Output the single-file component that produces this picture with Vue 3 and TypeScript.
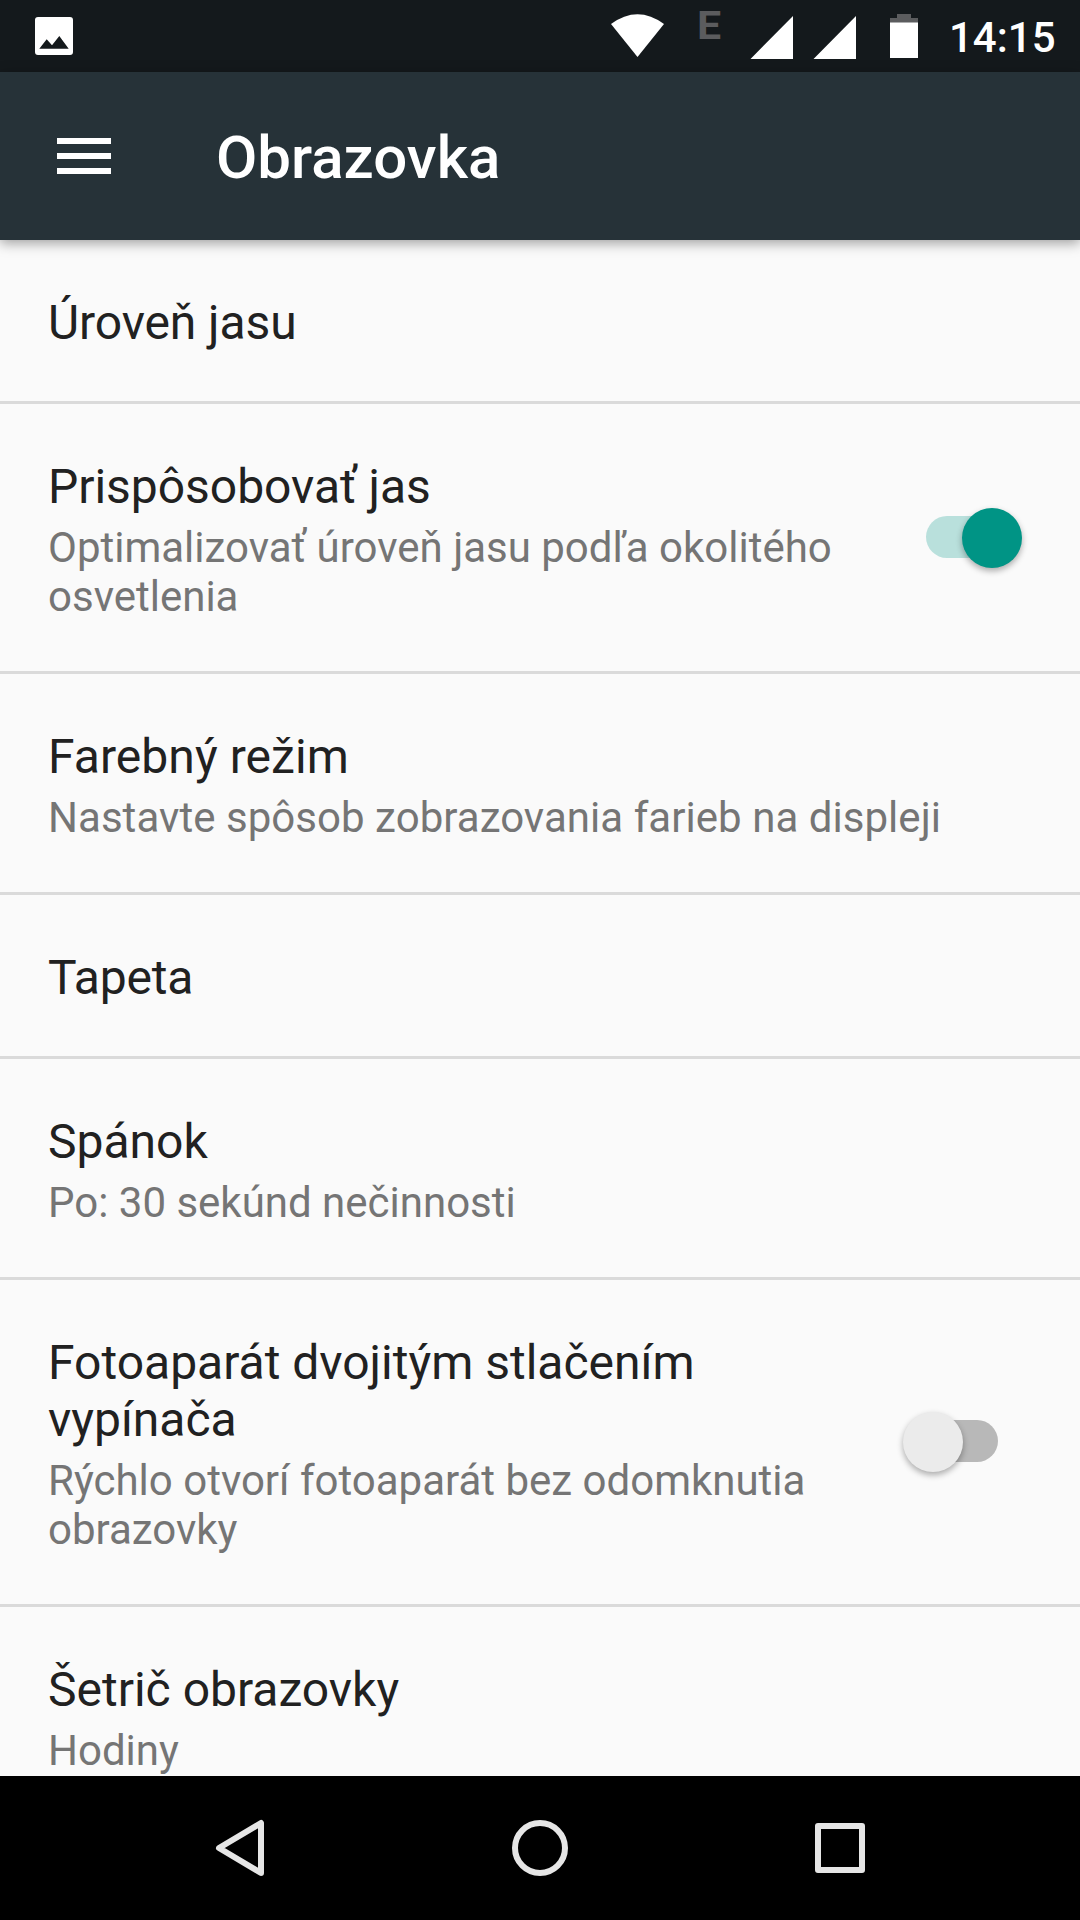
<script setup lang="ts">
interface Item { title: string[]; sub?: string[]; on?: boolean; toggle?: boolean; height: number; titleTracking?: number; subTracking?: number }
const items: Item[] = [
  { title: ['Úroveň jasu'], height: 164, titleTracking: -0.1 },
  { title: ['Prispôsobovať jas'], sub: ['Optimalizovať úroveň jasu podľa okolitého', 'osvetlenia'], toggle: true, on: true, height: 270, titleTracking: -0.04 },
  { title: ['Farebný režim'], sub: ['Nastavte spôsob zobrazovania farieb na displeji'], height: 221, titleTracking: 0.06, subTracking: 0.045 },
  { title: ['Tapeta'], height: 164, titleTracking: -0.2 },
  { title: ['Spánok'], sub: ['Po: 30 sekúnd nečinnosti'], height: 221 },
  { title: ['Fotoaparát dvojitým stlačením', 'vypínača'], sub: ['Rýchlo otvorí fotoaparát bez odomknutia', 'obrazovky'], toggle: true, on: false, height: 327 },
  { title: ['Šetrič obrazovky'], sub: ['Hodiny'], height: 221 },
]
</script>

<template>
  <div class="screen">
    <header class="status">
      <svg width="1080" height="72" viewBox="0 0 1080 72">
        <path fill="#fff" fill-rule="evenodd" d="M38 17H70Q73 17 73 20V52Q73 55 70 55H38Q35 55 35 52V20Q35 17 38 17ZM39.3 48.7H68.7L59.3 36L52 45.3L46.7 39.3Z" />
        <path fill="#fff" d="M611 24Q637.5 4.5 664 24L637.5 57Z" />
        <path fill="#fff" d="M793 16V59H750.5ZM856 16V59H813.5Z" />
        <path fill="#5b5c5e" d="M897 14H911V18H918V23H890V18H897Z" />
        <path fill="#fff" d="M890 22.5H918V58H890Z" />
      </svg>
      <span class="edge">E</span>
      <span class="time">14:15</span>
    </header>
    <div class="bar">
      <svg class="menu" width="54" height="36" viewBox="0 0 54 36"><path fill="#fff" d="M0 0H54V6H0ZM0 15H54V21H0ZM0 30H54V36H0Z" /></svg>
      <h1>Obrazovka</h1>
    </div>
    <main>
      <section v-for="item in items" :key="item.title[0]" class="item" :style="{ height: item.height + 'px' }">
        <div class="copy">
          <div v-for="line in item.title" :key="line" class="title" :style="{ letterSpacing: (item.titleTracking ?? 0) + 'px' }">{{ line }}</div>
          <div v-if="item.sub" class="sub" :style="{ letterSpacing: (item.subTracking ?? 0) + 'px' }"><div v-for="line in item.sub" :key="line">{{ line }}</div></div>
        </div>
        <div v-if="item.toggle" class="switch" :class="{ on: item.on }"><i class="track"></i><i class="thumb"></i></div>
      </section>
    </main>
    <nav>
      <svg width="1080" height="144" viewBox="0 0 1080 144" fill="none" stroke="#e6e6e6" stroke-width="6" stroke-linejoin="round">
        <path d="M261 47V97L219 72Z" /><circle cx="540" cy="72" r="25" /><rect x="818" y="50" width="44" height="44" />
      </svg>
    </nav>
  </div>
</template>

<style scoped>
.screen { width: 1080px; height: 1920px; overflow: hidden; display: flex; flex-direction: column; background: #fafafa; font-family: Roboto, sans-serif; }
.status { height: 72px; flex: none; position: relative; background: #14191c; color: #fff; }
svg { display: block; }
.edge { position: absolute; left: 697px; top: 3px; font-size: 39px; line-height: 46px; font-weight: 700; color: #5b5c5e; transform: scaleX(1.1); transform-origin: left; }
.time { position: absolute; left: 949px; top: 13px; font-size: 42px; line-height: 50px; font-weight: 500; }
.bar { height: 168px; flex: none; display: flex; align-items: center; background: #263238; color: #fff; box-shadow: 0 3px 12px rgba(0,0,0,.38); z-index: 1; }
.menu { margin-left: 57px; margin-right: 105px; }
h1 { margin: 0; font-size: 60px; line-height: 70px; font-weight: 500; position: relative; top: 2px; }
main { flex: 1; min-height: 0; overflow: hidden; }
.item { box-sizing: border-box; display: flex; justify-content: space-between; padding: 54px 48px 0; border-bottom: 3px solid #dadada; }
.copy { white-space: nowrap; }
.title { font-size: 48px; line-height: 57px; color: #212121; }
.sub { margin-top: 8px; font-size: 42px; line-height: 49px; color: #757575; }
.switch { position: relative; width: 120px; height: 60px; align-self: center; top: -28px; margin-right: 9px; }
.switch.on { top: -27.5px; }
.track { position: absolute; left: 23px; top: 9px; width: 72px; height: 42px; border-radius: 21px; background: #b8b8b8; }
.thumb { position: absolute; left: -0.5px; top: 0.5px; width: 60px; height: 60px; border-radius: 50%; background: #ebebeb; box-shadow: 0 3px 6px rgba(0,0,0,.32); }
.on .track { background: #b9e0dc; }
.on .thumb { left: 58.6px; background: #009485; }
nav { height: 144px; flex: none; background: #000; }
</style>
